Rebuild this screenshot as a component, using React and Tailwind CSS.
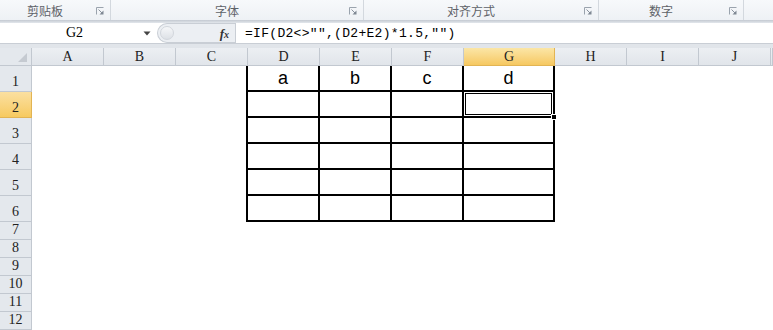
import React from "react";

const COLS = ["A", "B", "C", "D", "E", "F", "G", "H", "I", "J", ""];
const ROWS = [1, 2, 3, 4, 5, 6, 7, 8, 9, 10, 11, 12];
const HEAD = ["a", "b", "c", "d"];

const groups = [
  { label: "剪贴板", width: "w-[111px]" },
  { label: "字体", width: "w-[253px]" },
  { label: "对齐方式", width: "w-[235px]" },
  { label: "数字", width: "w-[145px]" },
];

const Launcher = () => (
  <svg width="8" height="8" viewBox="0 0 8 8">
    <path d="M0.5 7.5V0.5H7.5" fill="none" stroke="#9aa3ad" strokeWidth="1" />
    <path d="M2.5 2.5L6.5 6.5" stroke="#8a939e" strokeWidth="1" />
    <path d="M7.5 3.5V7.5H3.5Z" fill="#7f8893" />
  </svg>
);

const mono = "font-['Liberation_Mono']";
const serif = "font-['Liberation_Serif']";

function Cell({ col, row }) {
  const inTable = row <= 6 && col >= 3 && col <= 6;
  const leftEdge = row <= 6 && col === 2;
  const selected = row === 2 && col === 6;
  let cls = "relative bg-white";
  if (inTable) cls += " border-r-2 border-b-2 border-black flex items-center justify-center";
  if (leftEdge) cls += " border-r-2 border-black";
  return (
    <div className={cls}>
      {inTable && row === 1 && (
        <span className="font-['Liberation_Sans'] text-[18px] leading-none text-black">
          {HEAD[col - 3]}
        </span>
      )}
      {selected && (
        <>
          <div className="absolute inset-0 border border-white">
            <div className="h-full w-full border border-black" />
          </div>
          <div className="absolute -bottom-[4px] -right-[4px] z-10 h-[6px] w-[6px] border border-white bg-black" />
        </>
      )}
    </div>
  );
}

export default function App() {
  return (
    <div className="h-[330px] w-[773px] overflow-hidden bg-white select-none">
      {/* ribbon group labels */}
      <div className="flex h-[20px] bg-gradient-to-b from-[#f7f9fb] to-[#eef1f5]">
        {groups.map((g) => (
          <div key={g.label} className={`${g.width} flex border-r border-[#d3d8de]`}>
            <div className="flex-1 pt-[1px] text-center font-['Noto_Sans_CJK_SC'] text-[12px] leading-[20px] text-[#5e6268]">
              {g.label}
            </div>
            <div className="flex w-[20px] items-center justify-center pt-[1px]">
              <Launcher />
            </div>
          </div>
        ))}
      </div>
      <div className="h-[3px] bg-gradient-to-b from-[#c3c9d1] to-[#e3e7ec]" />

      {/* formula bar */}
      <div className="flex h-[20px] bg-white">
        <div className="flex w-[157px] items-center">
          <div className={`flex-1 pl-[6px] text-center ${serif} text-[14px] leading-none text-black`}>G2</div>
          <svg width="8" height="5" viewBox="0 0 8 5" className="mr-[6px]">
            <path d="M0.5 0.5H7.5L4 4.5Z" fill="#444" />
          </svg>
        </div>
        <div className="flex w-[78px] items-center rounded-l-full border border-r-0 border-[#c9ced5] bg-[#eceff3]">
          <div className="ml-[2px] h-[14px] w-[14px] rounded-full border border-[#d2d6dc] bg-gradient-to-b from-[#f6f7f9] to-[#dde1e6]" />
          <span className={`ml-auto mr-[6px] ${serif} text-[13px] font-bold italic leading-none text-[#333]`}>
            f<span className="text-[10px]">x</span>
          </span>
        </div>
        <div className="w-[1px] bg-[#c9ced5]" />
        <div className={`flex flex-1 items-center pl-[9px] ${mono} text-[13px] leading-none tracking-[0.3px] text-black`}>
          =IF(D2&lt;&gt;″″,(D2+E2)*1.5,″″)
        </div>
      </div>
      <div className="h-[5px] border-t border-[#c9ced5] bg-[#e1e5ea]" />

      {/* sheet */}
      <div className="grid grid-cols-[32px_72px_72px_72px_72px_72px_72px_91px_72px_72px_72px_1fr] grid-rows-[18px_repeat(6,26px)_repeat(6,18px)]">
        <div className="relative border-r border-b border-[#c2c8d0] bg-[#e4e8ed]">
          <svg width="9" height="9" viewBox="0 0 9 9" className="absolute bottom-[3px] right-[4px]">
            <path d="M9 0V9H0Z" fill="#c5cad1" />
          </svg>
        </div>
        {COLS.map((c, i) => (
          <div
            key={"h" + i}
            className={`flex items-center justify-center border-r border-b ${serif} text-[14px] leading-none text-[#222] ${
              c === "G"
                ? "border-[#e2b453] bg-gradient-to-b from-[#fbe6a6] to-[#f6c860]"
                : "border-[#c2c8d0] bg-gradient-to-b from-[#eceff3] to-[#e1e5ea]"
            }`}
          >
            {c}
          </div>
        ))}
        {ROWS.map((r) => (
          <React.Fragment key={r}>
            <div
              className={`flex items-end justify-center border-r border-b ${r <= 6 ? "pb-[2px]" : "pb-[2px]"} ${serif} text-[14px] leading-none text-[#222] ${
                r === 2
                  ? "border-[#e2b453] bg-gradient-to-b from-[#fbe0a0] to-[#f7ca5f]"
                  : "border-[#c2c8d0] bg-[#e4e8ed]"
              }`}
            >
              {r}
            </div>
            {COLS.map((c, i) => (
              <Cell key={r + "-" + i} col={i} row={r} />
            ))}
          </React.Fragment>
        ))}
      </div>
    </div>
  );
}
